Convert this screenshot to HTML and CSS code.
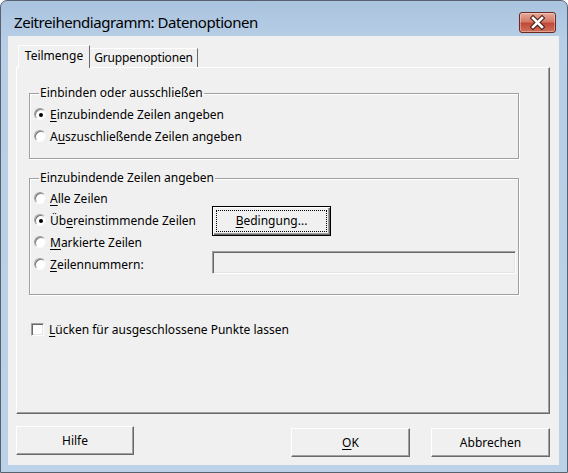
FILE: index.html
```html
<!DOCTYPE html>
<html lang="de">
<head>
<meta charset="utf-8">
<title>Zeitreihendiagramm: Datenoptionen</title>
<link rel="stylesheet" href="styles.css">
</head>
<body>
<div class="window">
  <div class="titlebar">
    <span class="title">Zeitreihendiagramm: Datenoptionen</span>
    <span class="close" aria-label="Schließen">
      <svg width="37" height="21" viewBox="0 0 37 21">
        <path d="M14 6 L23 15 M23 6 L14 15" stroke="#4a1a12" stroke-width="4.6" stroke-linecap="square" fill="none"/>
        <path d="M14 6 L23 15 M23 6 L14 15" stroke="#ffffff" stroke-width="2.6" stroke-linecap="square" fill="none"/>
      </svg>
    </span>
  </div>
  <div class="client">
    <div class="tabs">
      <div class="tab active">Teilmenge</div>
      <div class="tab">Gruppenoptionen</div>
    </div>
    <div class="panel">
      <fieldset class="group g1">
        <legend>Einbinden oder ausschließen</legend>
        <div class="row"><span class="radio on"></span><span><u>E</u>inzubindende Zeilen angeben</span></div>
        <div class="row"><span class="radio"></span><span>A<u>u</u>szuschließende Zeilen angeben</span></div>
      </fieldset>
      <fieldset class="group g2">
        <legend>Einzubindende Zeilen angeben</legend>
        <div class="grid">
          <div class="row"><span class="radio"></span><span><u>A</u>lle Zeilen</span></div>
          <div></div>
          <div class="row"><span class="radio on"></span><span>Üb<u>e</u>reinstimmende Zeilen</span></div>
          <div class="cell"><span class="btn default"><span class="focus"><u>B</u>edingung...</span></span></div>
          <div class="row"><span class="radio"></span><span><u>M</u>arkierte Zeilen</span></div>
          <div></div>
          <div class="row"><span class="radio"></span><span><u>Z</u>eilennummern:</span></div>
          <div class="cell"><span class="textbox"></span></div>
        </div>
      </fieldset>
      <div class="row check-row"><span class="check"></span><span><u>L</u>ücken für ausgeschlossene Punkte lassen</span></div>
    </div>
    <div class="buttons">
      <span class="btn push">Hilfe</span>
      <span class="spacer"></span>
      <span class="btn push low"><u>O</u>K</span>
      <span class="btn push low">Abbrechen</span>
    </div>
  </div>
</div>
</body>
</html>
```

FILE: styles.css
```css
* { box-sizing: border-box; }
html, body { margin: 0; padding: 0; }
body {
  width: 568px;
  height: 473px;
  overflow: hidden;
  background: #ffffff;
  font-family: "Noto Sans", "Open Sans", sans-serif;
  font-size: 12px;
  color: #000;
}
u { text-decoration: underline; text-underline-offset: 2px; }

.window {
  width: 568px;
  height: 473px;
  border: 1px solid #58626e;
  border-radius: 7px 7px 0 0;
  background: linear-gradient(#aac3de, #b7cee6 40px, #bcd2e9);
  display: flex;
  flex-direction: column;
}
.titlebar {
  height: 35px;
  flex: none;
  display: flex;
  align-items: flex-start;
  padding: 11px 11px 0 13px;
}
.title {
  font-size: 15px;
  line-height: 20px;
  letter-spacing: -0.45px;
  color: #000;
}
.close {
  margin-left: auto;
  width: 37px;
  height: 21px;
  border: 1px solid #6a2a22;
  border-radius: 3px;
  background: linear-gradient(#e6a999, #d47a67 45%, #c2493a 55%, #d0705a);
  box-shadow: inset 0 0 0 1px rgba(255,255,255,0.35);
  display: flex;
  align-items: center;
  justify-content: center;
  overflow: hidden;
}
.close svg { display: block; margin: -1px; }

.client {
  flex: 1;
  margin: 0 8px 7px 7px;
  background: #f0f0f0;
  padding: 9px 9px 0 8px;
  display: flex;
  flex-direction: column;
}

.tabs {
  height: 22px;
  display: flex;
  align-items: flex-end;
  padding-left: 2px;
  position: relative;
  z-index: 1;
}
.tab {
  height: 19px;
  line-height: 17px;
  padding: 0 2px;
  border: 1px solid #a0a0a0;
  border-bottom: none;
  border-left-color: #fff;
  border-top-color: #fff;
  border-right-color: #696969;
  background: #f0f0f0;
  text-align: center;
  white-space: nowrap;
}
.tab.active {
  width: 72px;
  height: 23px;
  line-height: 20px;
  margin-bottom: -1px;
}
.tab:not(.active) {
  width: 108px;
  border-left: none;
  letter-spacing: -0.15px;
}

.panel {
  width: 534px;
  height: 347px;
  flex: none;
  border: 1px solid;
  border-color: #fff #696969 #696969 #fff;
  box-shadow: inset -1px -1px 0 #a0a0a0;
  padding: 18px 0 0 12px;
}

.group {
  width: 490px;
  margin: 0;
  border: 1px solid #a0a0a0;
  box-shadow: 1px 1px 0 #fff, inset 1px 1px 0 #fff;
  padding: 3px 4px 11px 4px;
  min-width: 0;
}
.group legend {
  padding: 0 1px;
  margin-left: 5px;
  line-height: 14px;
  height: 14px;
}
.g2 {
  margin-top: 12px;
  padding: 2px 4px 19px 4px;
}

.row {
  height: 22px;
  display: flex;
  align-items: center;
  gap: 4px;
  white-space: nowrap;
}

.radio {
  width: 12px;
  height: 12px;
  flex: none;
  border-radius: 50%;
  background: #fff;
  border: 1px solid;
  border-color: #a0a0a0 #f4f4f4 #fbfbfb #a0a0a0;
  box-shadow: inset 1px 1px 0 #7a7a7a;
  display: flex;
  align-items: center;
  justify-content: center;
}
.radio.on::after {
  content: "";
  width: 4px;
  height: 4px;
  border-radius: 50%;
  background: #000;
  margin: 1px 0 0 1px;
}

.grid {
  display: grid;
  grid-template-columns: 178px 304px;
  grid-auto-rows: 22px;
}
.cell {
  display: flex;
  align-items: center;
}

.btn {
  display: flex;
  align-items: center;
  justify-content: center;
  background: #f0f0f0;
  border: 1px solid;
  border-color: #fff #696969 #696969 #fff;
  box-shadow: inset -1px -1px 0 #a0a0a0;
  white-space: nowrap;
}
.btn.default {
  width: 119px;
  height: 30px;
  margin-top: 1px;
  border: 1px solid #000;
  box-shadow: inset 1px 1px 0 #fff, inset -1px -1px 0 #696969, inset -2px -2px 0 #a0a0a0;
  padding: 3px;
}
.focus {
  flex: 1;
  align-self: stretch;
  display: flex;
  align-items: center;
  justify-content: center;
  border: 1px dotted #000;
}

.textbox {
  width: 304px;
  height: 23px;
  margin-top: -3px;
  border: 1px solid;
  border-color: #a0a0a0 #fff #fff #a0a0a0;
  box-shadow: inset 1px 1px 0 #696969, inset -1px -1px 0 #e3e3e3;
  background: #f0f0f0;
}

.check-row {
  margin-top: 23px;
  padding-left: 2px;
  gap: 5px;
}
.check {
  width: 13px;
  height: 13px;
  flex: none;
  background: #fff;
  border: 1px solid;
  border-color: #a0a0a0 #fff #fff #a0a0a0;
  box-shadow: inset 1px 1px 0 #696969, inset -1px -1px 0 #e3e3e3;
}

.buttons {
  width: 534px;
  display: flex;
  align-items: flex-start;
  margin-top: 12px;
  gap: 21px;
}
.spacer { flex: 1; }
.push {
  width: 118px;
  height: 29px;
}
.push.low {
  width: 119px;
  margin-top: 2px;
}
```
